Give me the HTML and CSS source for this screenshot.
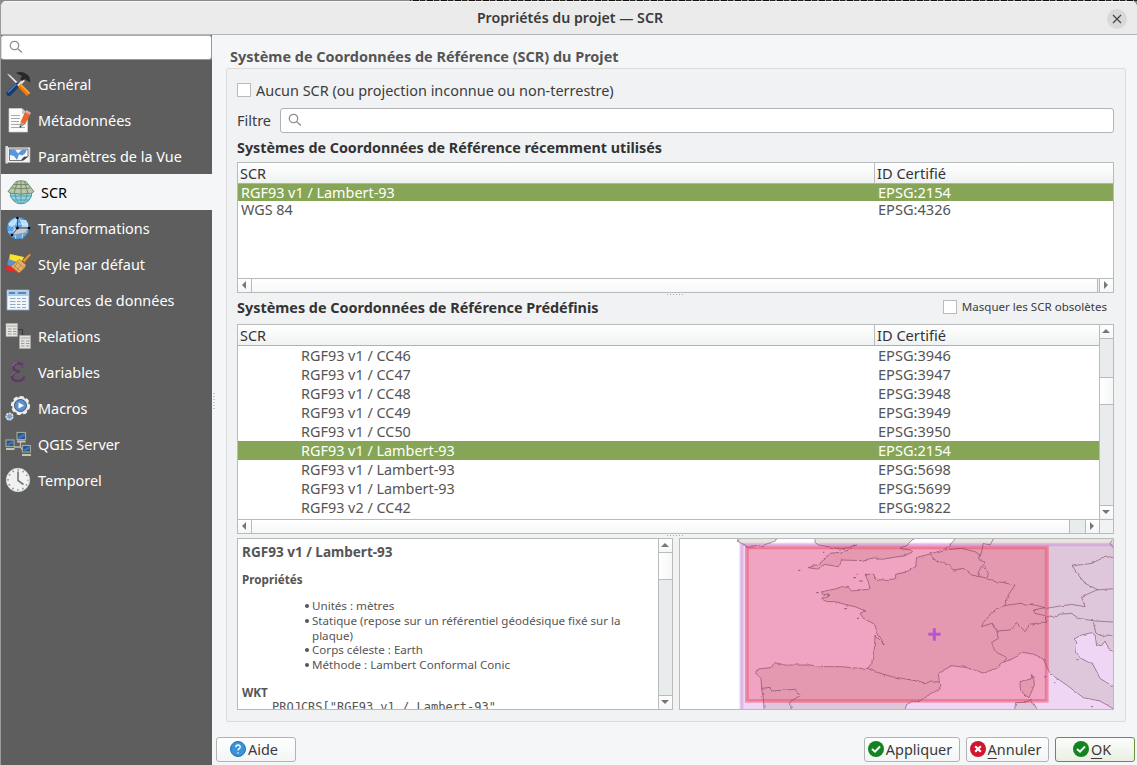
FILE: index.html
```html
<!DOCTYPE html>
<html lang="fr">
<head>
<meta charset="utf-8">
<title>Propriétés du projet — SCR</title>
<link rel="stylesheet" href="styles.css">
</head>
<body>
<div class="backdrop"></div>
<div class="window">
  <header class="titlebar">
    <span class="title">Propriétés du projet — SCR</span>
    <button class="close" aria-label="Fermer"><svg width="10" height="10" viewBox="0 0 10 10"><path d="M1 1L9 9M9 1L1 9" stroke="#444" stroke-width="1.2"/></svg></button>
  </header>
  <div class="body">
    <aside class="sidebar">
      <div class="search side-search"><svg width="14" height="14" viewBox="0 0 14 14"><circle cx="5.5" cy="5.5" r="4.2"/><path d="M8.7 8.7L13 12.6"/></svg></div>
      <nav>
        <div class="item"><svg class="ico" viewBox="0 0 26 26"><path d="M2 2.500L5 4 15 13.500 13.500 15 4 5Z" fill="#e4e4e4"/><path d="M12.500 14L4 22.500" stroke="#18396f" stroke-width="5" stroke-linecap="round"/><path d="M11 13.500L3.500 21" stroke="#4a7dbf" stroke-width="1.600" stroke-linecap="round"/><path d="M19 9L13 15" stroke="#e5e2dc" stroke-width="2.600"/><path d="M11 2C15 0 21 1 24.500 6L25.300 11.500 22 9.500 20 8 17 10 15 8 17 5Z" fill="#292929"/><path d="M14.500 14L23.500 23.500" stroke="#f57900" stroke-width="4.600"/><path d="M15.500 13.500L24.500 22.500" stroke="#ffb04a" stroke-width="1.200"/></svg><span>Général</span></div>
        <div class="item"><svg class="ico" viewBox="0 0 26 26"><path d="M4 1.500H17L22.500 7V25H4Z" fill="#fbfbfb" stroke="#d0d0d0" stroke-width=".7"/><path d="M17 1.500V7H22.500Z" fill="#c9c9c9"/><path d="M6 8.500H15M6 11.500H15M6 14.500H14M6 17.500H18M6 20.500H20" stroke="#aaa" stroke-width="1.200"/><path d="M20 5L25 8 20 17.500 15.500 15Z" fill="#e9682c"/><path d="M20 5L21.500 3 25.800 5.500 25 8Z" fill="#e7aaa0"/><path d="M15.500 15L20 17.500 15 20.500Z" fill="#a09a90"/><path d="M14.500 18.500L15 20.800 16.500 19.500Z" fill="#222"/></svg><span>Métadonnées</span></div>
        <div class="item"><svg class="ico" viewBox="0 0 26 26"><path d="M1 4.500H25V19.500H1Z" fill="#f2f2ee" stroke="#aaa" stroke-width=".7"/><rect x=".5" y="3" width="2.500" height="17.500" fill="#ddd"/><path d="M4.500 6H23V13.500L17 17.500H4.500Z" fill="#f6f9fc" stroke="#555" stroke-width=".8"/><path d="M5 6.500H10L13 10.500 16 7.500 18 6.500H22L20 10.500 17 12.500 14 11.500 12 17 9 13 5 12Z" fill="#5d95d6"/><path d="M16 17L18.500 17.500 23 13.500 19 13.800Z" fill="#444"/></svg><span>Paramètres de la Vue</span></div>
        <div class="item active"><svg class="ico wide" viewBox="0 0 28 26"><circle cx="14" cy="14" r="10.800" fill="#93d3de" stroke="#4d99a7"/><path d="M3.500 17H24.500M6 21H22M14 15V25M8 15Q8 21 13 25M20 15Q20 21 15 25" stroke="#4d99a7" fill="none" stroke-width=".9"/><path d="M9 2.500Q14 .8 19 2.500L27 12.500Q24 15.500 19 14.500 14 16 9 14.500 4 15.500 1 12.500Z" fill="#bac7a4" stroke="#6c8466" stroke-width=".9"/><path d="M7 5.500H21M4.500 9Q14 10.500 23.500 9M10.500 2.500L7 14.500M14 2V15M17.500 2.500L21 14.500" stroke="#718469" fill="none" stroke-width=".9"/></svg><span>SCR</span></div>
        <div class="item"><svg class="ico" viewBox="0 0 26 26"><circle cx="13" cy="13" r="11" fill="#5ba3e2" stroke="#3b77b5" stroke-width=".8"/><path d="M4 8Q8 3 14 2.500L12 7 7 12 4 11ZM15 5L21 5Q24 9 23 12L18 12ZM9 14L14 13 12 17 8 19Z" fill="#b9dcf7"/><path d="M13 2Q6 10 11 24M13 2Q20 8 17 24M3 9H23M3 17H22" stroke="#d9eeff" fill="none" stroke-width=".7"/><path d="M7 20L13 13 24 13 20 18Z" fill="#c9cdd0" stroke="#99a"/><path d="M12.500 3V13L7 20M12.500 13H24" stroke="#333" stroke-width=".7" fill="none"/><circle cx="12.500" cy="3" r="1.300"/><circle cx="12.500" cy="13" r="1.400"/><circle cx="7" cy="20" r="1.300"/><circle cx="24" cy="13" r="1.300"/></svg><span>Transformations</span></div>
        <div class="item"><svg class="ico" viewBox="0 0 26 26"><path d="M5 3L19 6 15 14 4 9Z" fill="#fae22f"/><path d="M3.500 8L12 11 9 18 2 14Z" fill="#5d91cf"/><path d="M2 13.500L9 17 13 22 0 19Z" fill="#e02b28"/><path d="M17.500 9.500L24.500 2.500 25.800 4 19.500 11.500Z" fill="#e39a30" stroke="#9e631c" stroke-width=".5"/><path d="M11 11L14.500 8.500 21 14 19.500 17 14 22 6 15.500Z" fill="#e4b269" stroke="#a77231" stroke-width=".7"/><path d="M12 11L19.500 17M9 14L15 20M12 12L9 18M16 14L12 19" stroke="#b27d3c" stroke-width=".8"/></svg><span>Style par défaut</span></div>
        <div class="item"><svg class="ico" viewBox="0 0 26 26"><rect x="2" y="3" width="22" height="20" fill="#f2f6fa" stroke="#86a9cd" stroke-width=".8"/><rect x="2.500" y="3.500" width="21" height="5.500" fill="#aacdee"/><path d="M4 6H10M13 6H21" stroke="#3f73a9" stroke-width="1.400"/><path d="M5 11.500H10.500M12 11.500H15.500M17 11.500H21M5 14.500H10.500M12 14.500H15.500M17 14.500H21M5 17.500H10.500M12 17.500H15.500M17 17.500H21M5 20.500H10.500M12 20.500H15.500M17 20.500H21" stroke="#8eabca" stroke-width="1.100"/></svg><span>Sources de données</span></div>
        <div class="item"><svg class="ico" viewBox="0 0 26 26"><path d="M13 6.500H17.500V12" stroke="#333b46" stroke-width="1.200" fill="none"/><g fill="#e5e5e0" stroke="#aaa" stroke-width=".6"><rect x="1" y="0.500" width="11.500" height="13"/><rect x="14.500" y="12.500" width="11" height="13"/></g><path d="M2 3H12M15.500 15H25" stroke="#aaa" stroke-width="1"/><path d="M3 6H6.500M8 6H11.500M3 8.500H6.500M8 8.500H11.500M3 11H6.500M8 11H11.500M16 18H19.500M21 18H24.500M16 20.500H19.500M21 20.500H24.500M16 23H19.500M21 23H24.500" stroke="#999" stroke-width="1"/></svg><span>Relations</span></div>
        <div class="item"><svg class="ico" viewBox="0 0 26 26"><path d="M18 8C17.500 3 8.500 2.500 8.500 8C8.500 11.500 12 12.500 15 12.500C10 12.500 7 14 7 17.500C7 23.500 18.500 23.500 19 17.500" fill="none" stroke="#5d3a66" stroke-width="2.700"/><circle cx="18" cy="7" r="1.900" fill="#6d4777"/><path d="M7.700 7C8 4.800 10 4 12 3.600M6.500 16.500C7 14.500 8.500 13.500 10.500 13" fill="none" stroke="#a58bab" stroke-width=".8"/></svg><span>Variables</span></div>
        <div class="item"><svg class="ico" viewBox="0 0 26 26"><circle cx="15.500" cy="10.500" r="8.500" fill="#e9e9e6" stroke="#efefec" stroke-width="2.200" stroke-dasharray="4 2.500"/><circle cx="15.500" cy="10.500" r="6" fill="#5b90cc" stroke="#31588b"/><path d="M13.500 7.500L19 10.500 13.500 13.500Z" fill="#fff"/><circle cx="4.500" cy="21.500" r="3.200" fill="#6fa0d5" stroke="#ddd" stroke-width="1.800" stroke-dasharray="2.200 .6"/></svg><span>Macros</span></div>
        <div class="item"><svg class="ico" viewBox="0 0 26 26"><path d="M15.500 10V16H9M15.500 16L18 20" stroke="#bbb" fill="none" stroke-width="1.300"/><g fill="#22518f" stroke="#a3a795" stroke-width="1.200"><rect x="12" y="1.500" width="8.500" height="7"/><rect x="1" y="9" width="8" height="6.500"/><rect x="17.500" y="14.500" width="8" height="6.500"/></g><path d="M12.500 6L20 2V5L14 8ZM1.500 13L8.500 9.500V12L3 15ZM18 18.500L25 15V17.500L20 20.500Z" fill="#4173b5"/><path d="M12 10.500H20.500M1 18H9.500M17 24H26" stroke="#c3c5b4" stroke-width="2.200"/></svg><span>QGIS Server</span></div>
        <div class="item"><svg class="ico" viewBox="0 0 26 26"><circle cx="13" cy="13" r="11.700" fill="#f1f1ef" stroke="#ddd" stroke-width=".7"/><circle cx="13" cy="13" r="9.900" fill="none" stroke="#7a94b2" stroke-width="1.800" stroke-dasharray="1.400 3.780" stroke-dashoffset=".7"/><path d="M13 4.500V13.500L18.500 17.500" stroke="#777" stroke-width="1.600" fill="none"/></svg><span>Temporel</span></div>
      </nav>
    </aside>
    <div class="grip-v"></div>
    <main class="main">
      <h1>Système de Coordonnées de Référence (SCR) du Projet</h1>
      <section class="group">
        <label class="check"><i class="box"></i><span>Aucun SCR (ou projection inconnue ou non-terrestre)</span></label>
        <div class="filter"><span>Filtre</span><div class="search"><svg width="14" height="14" viewBox="0 0 14 14"><circle cx="5.500" cy="5.500" r="4.200"/><path d="M8.700 8.700L13 12.600"/></svg></div></div>
        <h2>Systèmes de Coordonnées de Référence récemment utilisés</h2>
        <div class="table recent">
          <div class="row head"><span>SCR</span><span>ID Certifié</span></div>
          <div class="rows">
            <div class="row sel"><span>RGF93 v1 / Lambert-93</span><span>EPSG:2154</span></div>
            <div class="row"><span>WGS 84</span><span>EPSG:4326</span></div>
          </div>
          <div class="hbar"><i class="arrow left"></i><b></b><em class="slim"></em><i class="arrow right"></i></div>
        </div>
        <div class="grip-h"></div>
        <div class="heading"><h2>Systèmes de Coordonnées de Référence Prédéfinis</h2><label class="check small"><i class="box"></i><span>Masquer les SCR obsolètes</span></label></div>
        <div class="table predefined">
          <div class="table-main">
            <div class="table-body">
              <div class="row head"><span>SCR</span><span>ID Certifié</span></div>
              <div class="rows">
                <div class="row"><span>RGF93 v1 / CC46</span><span>EPSG:3946</span></div>
                <div class="row"><span>RGF93 v1 / CC47</span><span>EPSG:3947</span></div>
                <div class="row"><span>RGF93 v1 / CC48</span><span>EPSG:3948</span></div>
                <div class="row"><span>RGF93 v1 / CC49</span><span>EPSG:3949</span></div>
                <div class="row"><span>RGF93 v1 / CC50</span><span>EPSG:3950</span></div>
                <div class="row sel"><span>RGF93 v1 / Lambert-93</span><span>EPSG:2154</span></div>
                <div class="row"><span>RGF93 v1 / Lambert-93</span><span>EPSG:5698</span></div>
                <div class="row"><span>RGF93 v1 / Lambert-93</span><span>EPSG:5699</span></div>
                <div class="row"><span>RGF93 v2 / CC42</span><span>EPSG:9822</span></div>
              </div>
            </div>
            <div class="vbar"><i class="arrow up"></i><em></em><b></b><em class="rest"></em><i class="arrow down"></i></div>
          </div>
          <div class="hbar"><i class="arrow left"></i><b></b><em></em><i class="arrow right"></i><i class="corner"></i></div>
        </div>
        <div class="grip-h lower"></div>
        <div class="panels">
          <div class="desc">
            <div class="desc-text">
              <h3>RGF93 v1 / Lambert-93</h3>
              <h4>Propriétés</h4>
              <ul>
                <li>Unités : mètres</li>
                <li>Statique (repose sur un référentiel géodésique fixé sur la<br>plaque)</li>
                <li>Corps céleste : Earth</li>
                <li>Méthode : Lambert Conformal Conic</li>
              </ul>
              <h4>WKT</h4>
              <pre>PROJCRS["RGF93 v1 / Lambert-93",</pre>
            </div>
            <div class="vbar"><i class="arrow up"></i><b></b><em class="rest"></em><i class="arrow down"></i></div>
          </div>
          <svg class="map" viewBox="15 12 1299 510" preserveAspectRatio="none">
            <defs>
              <filter id="coast" x="-2%" y="-2%" width="104%" height="104%"><feTurbulence type="fractalNoise" baseFrequency=".05" numOctaves="2" seed="4"/><feDisplacementMap in="SourceGraphic" scale="9" xChannelSelector="R" yChannelSelector="G"/></filter>
              <g id="land">
                <path d="M420 0V22L430 30 470 37 495 42 520 38 545 27 520 45 495 52 465 55 450 72 430 88 400 98 425 102 450 88 490 95 500 75 560 77 600 68 610 75 650 68 690 62 710 52 715 45 690 43 675 40 695 30 715 12V0Z"/>
                <path d="M190 20L210 30 220 38 260 32 290 22 315 12V0H195Z"/>
                <path d="M840 0V12L825 30 805 45 765 57 725 67 722 95 700 107 690 112 662 118 662 130 640 137 600 132 597 118 570 118 580 140 585 163 560 165 530 168 520 157 500 155 480 162 440 170 442 178 465 180 440 190 458 200 480 200 510 208 540 215 570 228 555 235 565 250 600 268 605 290 628 328 600 300 598 340 590 385 578 400 550 400 500 395 450 395 400 390 330 390 300 383 285 398 250 402 242 415 258 430 260 460 265 490 268 540H685L695 508 740 492 795 462 793 440 790 415 830 392 875 398 925 414 965 400 985 382 1015 370 1040 352 1075 357 1105 372 1120 405 1128 418 1175 450 1225 488 1275 498 1330 530V465L1275 430 1255 390 1215 368 1203 350 1205 320 1197 312 1220 300 1250 293 1260 300 1265 330 1280 332 1290 318 1300 340 1330 360V0Z"/>
                <path d="M1070 418L1068 432 1035 440 1036 465 1050 480 1062 488 1078 450 1076 430ZM1017 540L1022 503 1050 502 1070 493 1087 525V540Z"/>
                <path fill="none" d="M258 460L285 457 290 468 330 465 360 463 375 482 345 500 350 530M578 400L600 410 650 425 680 430 720 437 750 443 793 440M765 57L780 75 820 90 835 105 865 100 890 120 930 128 950 138 980 142 1020 150 1000 180 990 212M810 45L860 40 900 50 915 60 910 70 930 85 920 95 910 110 915 125M925 95L940 115 937 128M955 12L945 30 925 25 920 50 915 65M990 212L1035 205 1080 210 1110 218 1075 225 1080 235 1110 242 1115 262 1100 262 1065 268 1050 290 1025 262 1005 285 965 288 950 265 920 275 925 262 965 220ZM1115 220L1155 213 1190 208 1230 215 1220 185 1265 165 1330 160M1330 62L1285 68 1250 85 1192 93 1210 120 1230 145 1270 165M1115 245L1135 248 1150 238 1190 235 1210 250 1260 258 1330 262M1255 262L1262 290 1285 305 1300 300 1330 308M965 288L970 310 950 322 960 350 980 360 995 370 985 382M1314 12L1305 25 1316 40"/>
              </g>
            </defs>
            <rect x="15" y="12" width="1299" height="510" fill="#fff"/>
            <g filter="url(#coast)"><use href="#land" fill="#e8e6d8"/></g>
            <rect x="193" y="23" width="1125" height="500" fill="#eed6f4"/>
            <svg x="193" y="23" width="1121" height="499" viewBox="193 23 1121 499"><g filter="url(#coast)"><use href="#land" fill="#dec7db"/></g></svg>
            <path d="M201 522V30H1314" fill="none" stroke="#c982d7" stroke-opacity=".38" stroke-width="8"/>
            <svg x="210" y="32" width="911" height="471" viewBox="210 32 911 471"><rect x="210" y="32" width="911" height="471" fill="#f0a4c2"/><g filter="url(#coast)"><use href="#land" fill="#e499b0"/></g></svg>
            <rect x="215.500" y="37.500" width="900" height="460" fill="none" stroke="#f0566f" stroke-opacity=".3" stroke-width="11"/>
            <rect x="218" y="40" width="894" height="455" fill="none" stroke="#ea5c78" stroke-opacity=".45" stroke-width="5"/>
            <g filter="url(#coast)"><use href="#land" fill="none" stroke="#703858" stroke-opacity=".6" stroke-width="2.700"/></g>
            <path d="M444 52h4M370 106h6M424 173h7M535 128h8M553 138h10M545 118h3M508 221h8M546 250h6M1205 374h5M1138 443h3M1108 425h6M1249 515h5" stroke="#905070" stroke-width="3"/>
            <path d="M760 298H797M778 280V317" stroke="#b854d6" stroke-width="9"/>
          </svg>
        </div>
      </section>
      <footer class="actions">
        <button class="btn help"><svg class="bi" viewBox="0 0 16 16"><circle cx="8" cy="8" r="7.500" fill="#3a93d8" stroke="#1f6fae"/><path d="M5.800 6.200Q5.900 4 8 4T10.200 6Q10.200 7.200 8.900 7.900 8 8.400 8 9.600M8 11.200V12.600" stroke="#fff" stroke-width="1.300" fill="none"/></svg><span>Aide</span></button>
        <span class="spacer"></span>
        <button class="btn apply"><svg class="bi" viewBox="0 0 16 16"><circle cx="8" cy="8" r="8" fill="#128422"/><path d="M4 8L7 10.700 12 5.500" stroke="#fff" stroke-width="1.900" fill="none"/></svg><span>Appliquer</span></button>
        <button class="btn cancel"><svg class="bi" viewBox="0 0 16 16"><circle cx="8" cy="8" r="8" fill="#ce172f"/><path d="M5.200 5.200L10.800 10.800M10.800 5.200L5.200 10.800" stroke="#fff" stroke-width="2.100"/></svg><span><u>A</u>nnuler</span></button>
        <button class="btn ok"><svg class="bi" viewBox="0 0 16 16"><circle cx="8" cy="8" r="8" fill="#128422"/><path d="M4 8L7 10.700 12 5.500" stroke="#fff" stroke-width="1.900" fill="none"/></svg><span><u>O</u>K</span></button>
      </footer>
    </main>
  </div>
</div>
</body>
</html>
```
FILE: styles.css
```css
* { box-sizing: border-box; }
body {
  margin: 0;
  width: 1137px;
  height: 765px;
  overflow: hidden;
  display: flex;
  flex-direction: column;
  background: #8e8c88;
  color: #3c3c3c;
  font: 14.45px/18px "Noto Sans", "Open Sans", sans-serif;
}
h1, h2, h3, h4, ul, pre { margin: 0; padding: 0; }
.backdrop {
  height: 1px;
  flex: none;
  background: linear-gradient(90deg, #8b8986 0 410px, transparent 410px), repeating-linear-gradient(90deg, #25221f 0 5px, #8e8b85 5px 7px, #111 7px 13px, #aaa69c 13px 14px);
}
.window {
  flex: 1;
  display: flex;
  flex-direction: column;
  border-left: 1px solid #9b9b9b;
  border-radius: 6px 6px 0 0;
  background: #f5f6f8;
  overflow: hidden;
}
.titlebar {
  height: 34px;
  flex: none;
  display: grid;
  grid-template-columns: 1fr auto 1fr;
  align-items: center;
  background: #ebebeb;
  border-top: 1px solid #f8f8f8;
  border-bottom: 1px solid #b4b4b4;
}
.title { grid-column: 2; font-size: 14.2px; font-weight: 600; color: #3a3a3a; padding-left: 2px; }
.close {
  justify-self: end;
  width: 20px;
  height: 20px;
  margin: 2px 10px 0 0;
  padding: 0;
  border: 0;
  border-radius: 50%;
  background: #d9d9d9;
  display: grid;
  place-items: center;
}
.body { flex: 1; display: flex; min-height: 0; }

.sidebar { width: 211px; flex: none; background: #5e5e5e; }
.search {
  height: 25px;
  display: flex;
  align-items: center;
  padding-left: 7px;
  background: #fff;
  border: 1px solid #b1b4b5;
  border-radius: 3px;
}
.search svg { fill: none; stroke: #8e8e8e; stroke-width: 1.3; margin-top: -1px; }
.side-search { border-color: #aaa #999 #999 #ddd; }
nav { padding-top: 6px; }
.item {
  height: 36px;
  display: flex;
  align-items: center;
  gap: 7px;
  padding-left: 4px;
  color: #fff;
}
.item span { white-space: nowrap; position: relative; top: 1px; }
.ico { width: 26px; height: 26px; flex: none; }
.ico.wide { width: 28px; }
.item.active { background: #f5f6f8; color: #000; padding-left: 6px; gap: 6px; }
.grip-v {
  width: 2px;
  height: 17px;
  flex: none;
  margin: 358px 0 0 1px;
  background: repeating-linear-gradient(#c3c5c8 0 1px, transparent 1px 3px);
}

.main { flex: 1; min-width: 0; display: flex; flex-direction: column; }
h1 { font-size: 14.45px; line-height: 20px; font-weight: 700; color: #555; margin: 12px 0 1px 15px; white-space: nowrap; }
.group {
  height: 654px;
  margin: 0 11px 0 11px;
  padding: 11px 11px 0 10px;
  display: flex;
  flex-direction: column;
  background: #f1f2f4;
  border: 1px solid #d9dbdd;
  border-radius: 2px;
}
.check { height: 20px; display: flex; align-items: center; gap: 5px; white-space: nowrap; }
.check span { padding-top: 2px; }
.box { width: 14px; height: 14px; background: #fff; border: 1px solid #b9bbbd; }
.check.small { font-size: 11.55px; padding-right: 7px; }
.check.small span { padding-top: 0; }
.filter { display: flex; align-items: center; gap: 9px; margin-top: 8px; line-height: 17px; }
.filter .search { flex: 1; }
h2 { font-size: 14.32px; line-height: 20px; font-weight: 700; color: #333; white-space: nowrap; }
.group > h2 { margin: 5px 0 4px; }
.heading { height: 31px; display: flex; justify-content: space-between; align-items: center; padding-bottom: 3px; }
.heading h2 { font-size: 14.42px; margin-top: 1px; }

.table {
  display: flex;
  flex-direction: column;
  flex: none;
  background: #fff;
  border: 1px solid #b8babb;
  color: #555;
}
.recent { height: 131px; }
.predefined { height: 210px; }
.rows { flex: 1; }
.row { display: grid; grid-template-columns: 637px 1fr; align-items: center; white-space: nowrap; font-size: 14.4px; line-height: 17px; }
.row span { padding-left: 3px; }
.row span + span { font-size: 14.6px; }
.head { height: 21px; background: linear-gradient(#fff, #f0f2f2); border-bottom: 1px solid #b0b2b2; color: #333; flex: none; }
.head span { padding-left: 2px; height: 20px; line-height: 22px; }
.head span + span { border-left: 1px solid #bbb; margin-left: -1px; line-height: 20px; }
.recent .rows .row { height: 17px; }
.sel { background: #87a556; color: #fff; }
.table-main { display: flex; flex: 1; min-height: 0; }
.table-body { flex: 1; }
.predefined .rows .row { height: 19px; }
.predefined .rows .row span:first-child { padding-left: 63px; }

.hbar { display: flex; height: 14px; flex: none; border-top: 1px solid #b8babb; background: #e9ecec; }
.hbar b { flex: 1; background: linear-gradient(#fff, #f6f7f7); }
.hbar em { width: 16px; border-left: 1px solid #b8babb; }
.hbar em.slim { width: 2px; }
.vbar { width: 14px; flex: none; display: flex; flex-direction: column; border-left: 1px solid #b8babb; background: #e9ecec; }
.vbar em { height: 38px; }
.vbar .rest { flex: 1; height: auto; border-bottom: 1px solid #b8babb; }
.vbar b { height: 28px; background: linear-gradient(90deg, #fff, #f6f7f7); border-top: 1px solid #b8babb; border-bottom: 1px solid #b8babb; }
.arrow { width: 13px; height: 13px; display: grid; place-items: center; padding: 0 1px 1px 0; background: linear-gradient(#fff, #f5f6f6); flex: none; }
.arrow.left { border-right: 1px solid #b8babb; width: 14px; }
.arrow.right { border-left: 1px solid #b8babb; width: 14px; }
.arrow.up { border-bottom: 1px solid #b8babb; height: 14px; }
.desc .arrow.up { border-bottom: 0; height: 13px; }
.arrow::before { content: ""; border: 4px solid transparent; }
.arrow.left::before { border-right-color: #777; border-left-width: 0; }
.arrow.right::before { border-left-color: #777; border-right-width: 0; }
.arrow.up::before { border-bottom-color: #777; border-top-width: 0; }
.arrow.down::before { border-top-color: #777; border-bottom-width: 0; }
.corner { width: 14px; background: #f1f2f4; border-left: 1px solid #b8babb; }
.grip-h {
  align-self: center;
  width: 17px;
  height: 1px;
  margin-top: 1px;
  margin-bottom: -2px;
  background: repeating-linear-gradient(90deg, #aaa 0 1px, transparent 1px 3px);
}
.grip-h.lower { margin: 1px 0 2px; }

.panels { display: flex; gap: 6px; height: 172px; }
.desc { width: 436px; flex: none; display: flex; background: #fff; border: 1px solid #b8babb; color: #555; }
.desc-text { flex: 1; overflow: hidden; padding: 4px 0 0 4px; font-size: 11.6px; line-height: 15px; white-space: nowrap; }
.desc h3 { font-size: 13.55px; line-height: 18px; }
.desc h4 { font-size: 11.7px; line-height: 15px; margin-top: 11px; }
.desc ul { list-style: none; margin: 12px 0 12px 63px; line-height: 14.8px; }
.desc li { padding-left: 7px; position: relative; }
.desc li::before { content: ""; position: absolute; left: 0; top: 5px; width: 4px; height: 4px; border-radius: 50%; background: #555; }
.desc pre { font: 12px/15px "DejaVu Sans Mono", monospace; margin-left: 30px; }
.map { flex: 1; min-width: 0; height: 172px; border: 1px solid #b8babb; background: #fff; }

.actions { display: flex; gap: 6px; padding: 15px 2px 0 1px; }
.spacer { flex: 1; }
.btn {
  height: 25px;
  display: flex;
  align-items: center;
  justify-content: center;
  gap: 2px;
  padding: 0;
  border: 1px solid #b1b4b5;
  border-radius: 3px;
  background: linear-gradient(#fff, #f3f4f4);
  color: #3a3a3a;
  font: inherit;
}
.btn span { padding-top: 1px; }
.bi { width: 16px; height: 16px; margin-top: -1px; }
.help { width: 80px; padding-right: 4px; }
.apply { width: 96px; padding-right: 4px; }
.cancel { width: 83px; padding-right: 4px; }
.ok { width: 80px; padding-right: 6px; border-color: #6c8e41; background: linear-gradient(#fdfefc, #e9eee2); }
u { text-underline-offset: 3px; }
```
